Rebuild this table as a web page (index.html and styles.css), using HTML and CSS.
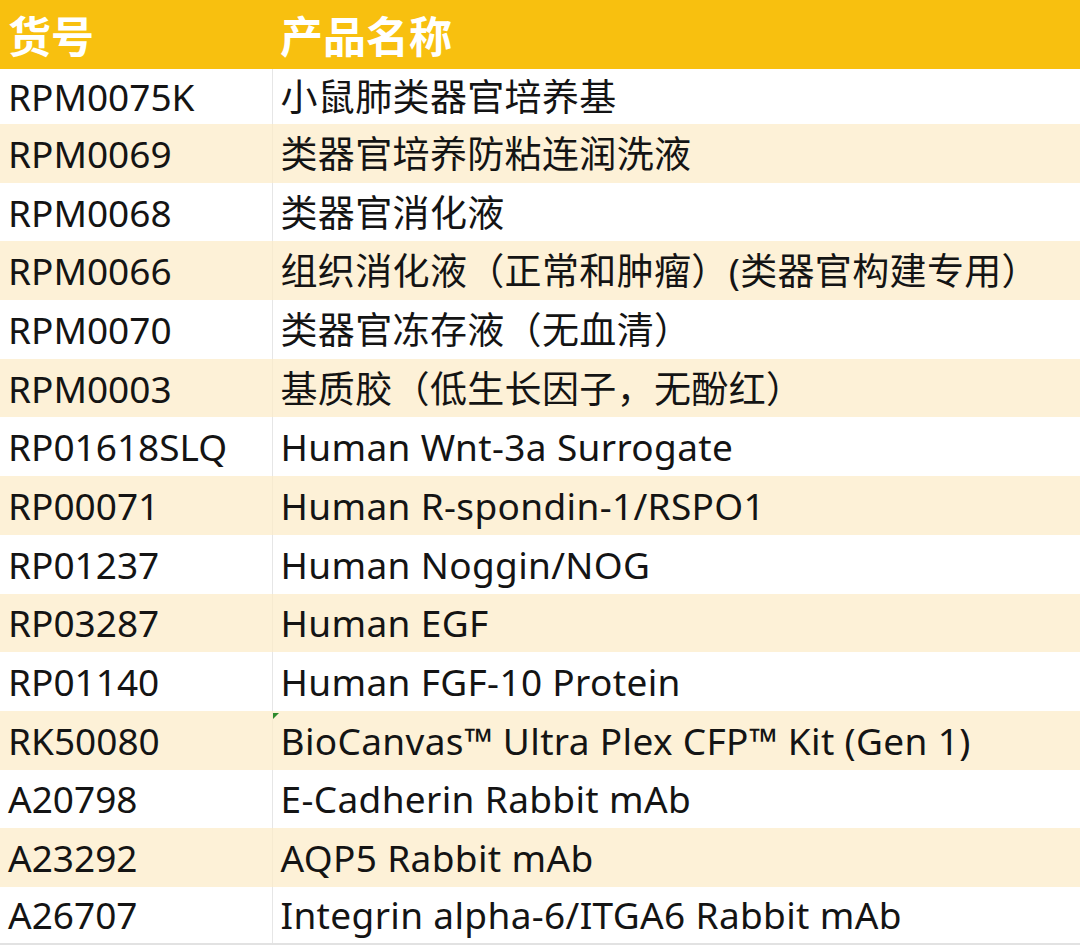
FILE: index.html
```html
<!DOCTYPE html>
<html lang="zh">
<head>
<meta charset="utf-8">
<link rel="stylesheet" href="styles.css">
</head>
<body>
<table class="products">
  <thead>
    <tr><th class="c1">货号</th><th class="c2">产品名称</th></tr>
  </thead>
  <tbody>
    <tr class="first"><td class="c1">RPM0075K</td><td class="c2">小鼠肺类器官培养基</td></tr>
    <tr class="alt"><td class="c1">RPM0069</td><td class="c2">类器官培养防粘连润洗液</td></tr>
    <tr><td class="c1">RPM0068</td><td class="c2">类器官消化液</td></tr>
    <tr class="alt"><td class="c1">RPM0066</td><td class="c2">组织消化液（正常和肿瘤）(类器官构建专用）</td></tr>
    <tr><td class="c1">RPM0070</td><td class="c2">类器官冻存液（无血清）</td></tr>
    <tr class="alt"><td class="c1">RPM0003</td><td class="c2">基质胶（低生长因子，无酚红）</td></tr>
    <tr><td class="c1">RP01618SLQ</td><td class="c2">Human Wnt-3a Surrogate</td></tr>
    <tr class="alt"><td class="c1">RP00071</td><td class="c2">Human R-spondin-1/RSPO1</td></tr>
    <tr><td class="c1">RP01237</td><td class="c2">Human Noggin/NOG</td></tr>
    <tr class="alt"><td class="c1">RP03287</td><td class="c2">Human EGF</td></tr>
    <tr><td class="c1">RP01140</td><td class="c2">Human FGF-10 Protein</td></tr>
    <tr class="alt"><td class="c1">RK50080</td><td class="c2 note">BioCanvas™ Ultra Plex CFP™ Kit (Gen 1)</td></tr>
    <tr><td class="c1">A20798</td><td class="c2">E-Cadherin Rabbit mAb</td></tr>
    <tr class="alt"><td class="c1">A23292</td><td class="c2">AQP5 Rabbit mAb</td></tr>
    <tr class="last"><td class="c1">A26707</td><td class="c2">Integrin alpha-6/ITGA6 Rabbit mAb</td></tr>
  </tbody>
</table>
</body>
</html>
```
FILE: styles.css
```css
html, body {
  margin: 0;
  padding: 0;
  background: #ffffff;
}
body {
  width: 1080px;
  height: 946px;
  overflow: hidden;
  font-family: "Noto Sans", "Noto Sans CJK SC", sans-serif;
  color: #141414;
}
.products {
  width: 1080px;
  border-collapse: collapse;
  table-layout: fixed;
}
.products th,
.products td {
  padding: 0 0 0 8px;
  text-align: left;
  white-space: nowrap;
  vertical-align: middle;
}
.products th {
  height: 69px;
  background: #f8c00f;
  color: #ffffff;
  font-family: "Noto Sans CJK SC", sans-serif;
  font-size: 43px;
  font-weight: 700;
  line-height: 1;
}
.products th.c1 { width: 264px; }
.products td {
  height: 58.7px;
  font-size: 37px;
  line-height: 1;
}
.products td.c2 {
  letter-spacing: 0.35px;
}
.products tr.first td {
  height: 55px;
}
.products tr.last td {
  height: 56px;
  border-bottom: 2px solid #e2e2e2;
}
.products td.c1 {
  border-right: 1px solid #e6e6e6;
}
.products tr.alt td {
  background: #fdf1d7;
}
.products tr.alt td.c1 {
  border-right-color: #f6ead0;
}
.note {
  position: relative;
}
.note::before {
  content: "";
  position: absolute;
  left: 0;
  top: 2px;
  width: 0;
  height: 0;
  border-top: 6px solid #2d8a2d;
  border-right: 6px solid transparent;
}
```
